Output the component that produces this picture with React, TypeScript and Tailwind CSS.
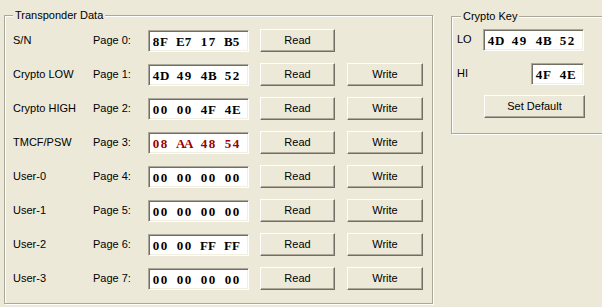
import React from "react";

const Edit = ({ w, text, red }: { w: string; text: string; red?: boolean }) => (
  <div
    className={`h-[22px] ${w} shrink-0 bg-white border border-t-[#aca899] border-l-[#aca899] border-b-white border-r-white shadow-[inset_1px_1px_0_#716f64,inset_-1px_-1px_0_#f1efe2] pl-[3px] pt-[1px] flex items-center font-['Liberation_Serif',serif] font-bold text-[13px] leading-none ${
      red ? "text-[#990000]" : "text-black"
    }`}
  >
    {text.split("").map((c, i) => (
      <span key={i} className="inline-block w-[8px] text-center">
        {c === " " ? "\u00a0" : c}
      </span>
    ))}
  </div>
);

const Btn = ({ w, label }: { w: string; label: string }) => (
  <div
    className={`h-[23px] ${w} shrink-0 flex items-center justify-center border border-t-white border-l-white border-b-[#716f64] border-r-[#716f64] shadow-[inset_-1px_-1px_0_#aca899] text-[11px] text-black`}
  >
    {label}
  </div>
);

const rows = [
  { name: "S/N", page: "Page 0:", val: "8F E7 17 B5", write: false },
  { name: "Crypto LOW", page: "Page 1:", val: "4D 49 4B 52", write: true },
  { name: "Crypto HIGH", page: "Page 2:", val: "00 00 4F 4E", write: true },
  { name: "TMCF/PSW", page: "Page 3:", val: "08 AA 48 54", write: true, red: true },
  { name: "User-0", page: "Page 4:", val: "00 00 00 00", write: true },
  { name: "User-1", page: "Page 5:", val: "00 00 00 00", write: true },
  { name: "User-2", page: "Page 6:", val: "00 00 FF FF", write: true },
  { name: "User-3", page: "Page 7:", val: "00 00 00 00", write: true },
];

export default function App() {
  return (
    <div className="w-[602px] h-[307px] overflow-hidden bg-[#ece9d8] flex items-start font-['Liberation_Sans',Arial,sans-serif] text-[11px] text-black">
      {/* Transponder Data */}
      <div className="relative ml-[4px] mt-[15px] w-[429px] h-[289px] shrink-0 border border-[#aca899] shadow-[1px_1px_0_#ffffff,inset_1px_1px_0_#ffffff]">
        <div className="absolute left-[8px] top-[-8px] px-[2px] bg-[#ece9d8] leading-[14px]">
          Transponder Data
        </div>
        <div className="flex flex-col gap-[11px] pt-[13px] pl-[8px]">
          {rows.map((r) => (
            <div key={r.page} className="flex items-center h-[23px]">
              <div className="w-[80px] shrink-0">{r.name}</div>
              <div className="w-[55px] shrink-0">{r.page}</div>
              <Edit w="w-[101px]" text={r.val} red={r.red} />
              <div className="ml-[11px]">
                <Btn w="w-[75px]" label="Read" />
              </div>
              {r.write && (
                <div className="ml-[12px]">
                  <Btn w="w-[76px]" label="Write" />
                </div>
              )}
            </div>
          ))}
        </div>
      </div>

      {/* Crypto Key */}
      <div className="relative ml-[18px] mt-[16px] w-[170px] h-[118px] shrink-0 border border-[#aca899] shadow-[1px_1px_0_#ffffff,inset_1px_1px_0_#ffffff]">
        <div className="absolute left-[9px] top-[-8px] px-[2px] bg-[#ece9d8] leading-[14px]">
          Crypto Key
        </div>
        <div className="flex flex-col pt-[11px] pl-[5px]">
          <div className="flex items-center h-[23px]">
            <div className="w-[26px] shrink-0">LO</div>
            <Edit w="w-[101px]" text="4D 49 4B 52" />
          </div>
          <div className="flex items-center h-[23px] mt-[11px]">
            <div className="w-[74px] shrink-0">HI</div>
            <Edit w="w-[53px]" text="4F 4E" />
          </div>
          <div className="flex mt-[10px] pl-[27px]">
            <Btn w="w-[101px]" label="Set Default" />
          </div>
        </div>
      </div>
    </div>
  );
}
